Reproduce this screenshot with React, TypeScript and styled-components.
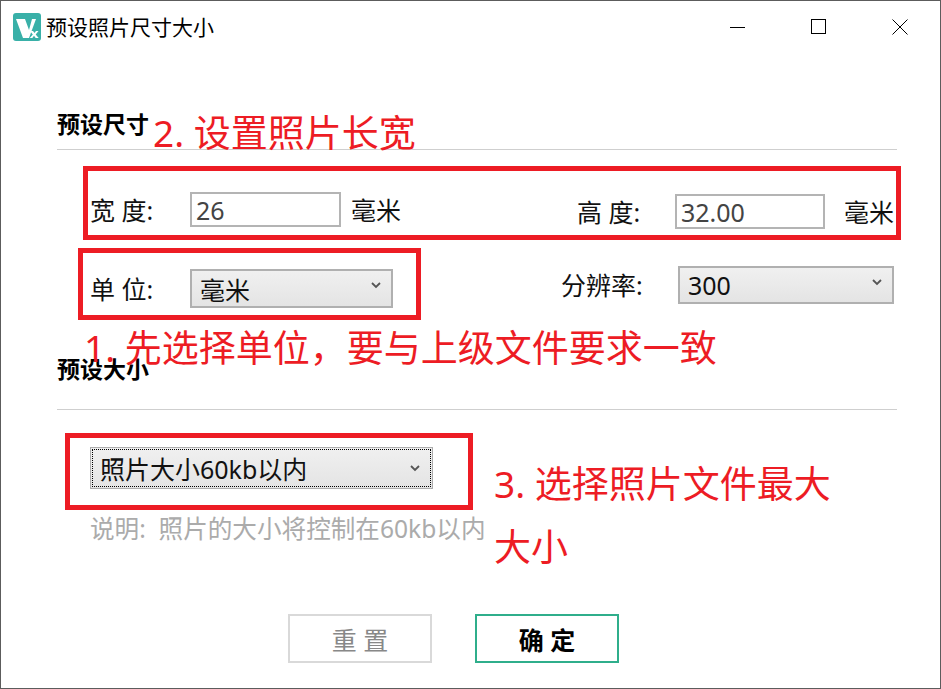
import styled, { createGlobalStyle } from "styled-components"

const GlobalStyle = createGlobalStyle`
    html, body {
        margin: 0;
        padding: 0;
        background: #fff;
    }
    * {
        box-sizing: border-box;
    }
`

function Logo() {
    return (
        <svg width="28" height="28" viewBox="0 0 28 28">
            <rect width="28" height="28" rx="3" fill="#39b0a8" />
            <path d="M3 6h9l4 11 3-11h4l-7 19h-6z" fill="#fff" />
            <path d="M17 18h3l1.5 2 1.5-2h2.500l-2.800 3.500 3 3.500h-3l-1.700-2.200-1.700 2.200h-2.500l3-3.500z" fill="#fff" />
        </svg>
    )
}

function Chevron() {
    return (
        <svg width="10" height="7" viewBox="0 0 10 7">
            <path d="M1 1l4 4 4-4" fill="none" stroke="#555" strokeWidth="1.800" />
        </svg>
    )
}

export default function App() {
    return (
        <Window>
            <GlobalStyle />
            <TitleBar>
                <Logo />
                <WindowTitle>预设照片尺寸大小</WindowTitle>
                <WindowButtons>
                    <WindowButton>
                        <svg width="16" height="16" viewBox="0 0 16 16">
                            <path d="M0 8.500h15" stroke="#000" />
                        </svg>
                    </WindowButton>
                    <WindowButton>
                        <svg width="16" height="16" viewBox="0 0 16 16">
                            <rect x="0.500" y="0.500" width="14" height="14" fill="none" stroke="#000" />
                        </svg>
                    </WindowButton>
                    <WindowButton>
                        <svg width="16" height="16" viewBox="0 0 16 16">
                            <path d="M0.500 0.500l15 15M15.500 0.500l-15 15" stroke="#000" />
                        </svg>
                    </WindowButton>
                </WindowButtons>
            </TitleBar>

            <Content>
                <SectionHead>预设尺寸</SectionHead>
                <Divider />
                <FormRow $top={42}>
                    <Field>
                        <FieldLabel>宽 度:</FieldLabel>
                        <TextBox $width={151}>26</TextBox>
                        <Unit>毫米</Unit>
                    </Field>
                    <Field $shift={2}>
                        <FieldLabel $width={98}>高 度:</FieldLabel>
                        <TextBox $width={150}>32.00</TextBox>
                        <Unit $gap={19}>毫米</Unit>
                    </Field>
                </FormRow>
                <FormRow $top={37}>
                    <Field $shift={3}>
                        <FieldLabel>单 位:</FieldLabel>
                        <SelectBox $width={203} $height={39}>
                            毫米
                            <Chevron />
                        </SelectBox>
                    </Field>
                    <Field>
                        <FieldLabel $width={117}>分辨率:</FieldLabel>
                        <SelectBox $width={216} $height={38}>
                            300
                            <Chevron />
                        </SelectBox>
                    </Field>
                </FormRow>

                <SectionHead $top={47}>预设大小</SectionHead>
                <Divider $top={26} />
                <SizeSelect>
                    <FocusRing>
                        照片大小60kb以内
                        <Chevron />
                    </FocusRing>
                </SizeSelect>
                <Hint>说明:&nbsp;&nbsp;照片的大小将控制在60kb以内</Hint>
                <Actions>
                    <ActionButton>重 置</ActionButton>
                    <ActionButton $primary>确 定</ActionButton>
                </Actions>
            </Content>

            <RedBox $left={83} $top={166} $width={818} $height={74} />
            <RedBox $left={78} $top={248} $width={343} $height={72} />
            <RedBox $left={65} $top={433} $width={408} $height={77} />

            <Note $left={153} $top={107}>2. 设置照片长宽</Note>
            <Note $left={84} $top={322}>1. 先选择单位，要与上级文件要求一致</Note>
            <Note $left={494} $top={458}>3. 选择照片文件最大</Note>
            <Note $left={494} $top={521}>大小</Note>
        </Window>
    )
}

const Window = styled.div`
    position: relative;
    width: 941px;
    height: 689px;
    overflow: hidden;
    display: flex;
    flex-direction: column;
    background: #fff;
    border: 1px solid #5c5c5c;
    font-family: "Noto Sans", "Noto Sans CJK SC", sans-serif;
    color: #111;
`

const TitleBar = styled.div`
    display: flex;
    align-items: center;
    height: 51px;
    padding-left: 12px;
    flex-shrink: 0;
`

const WindowTitle = styled.div`
    margin-left: 5px;
    font-size: 21px;
    line-height: 28px;
    color: #000;
`

const WindowButtons = styled.div`
    display: flex;
    margin-left: auto;
`

const WindowButton = styled.div`
    display: flex;
    align-items: center;
    justify-content: center;
    width: 81px;
    height: 51px;
`

const Content = styled.div`
    display: flex;
    flex-direction: column;
    padding: 58px 43px 0 56px;
`

const SectionHead = styled.div<{ $top?: number }>`
    margin-top: ${(p) => p.$top ?? 0}px;
    font-size: 23px;
    line-height: 28px;
    font-weight: 700;
    color: #000;
`

const Divider = styled.div<{ $top?: number }>`
    height: 1px;
    margin-top: ${(p) => p.$top ?? 11}px;
    background: #cfcfcf;
`

const FormRow = styled.div<{ $top: number }>`
    display: flex;
    justify-content: space-between;
    align-items: flex-start;
    margin-top: ${(p) => p.$top}px;
    padding: 0 3px 0 33px;
`

const Field = styled.div<{ $shift?: number }>`
    display: flex;
    align-items: center;
    margin-top: ${(p) => p.$shift ?? 0}px;
`

const FieldLabel = styled.div<{ $width?: number }>`
    width: ${(p) => p.$width ?? 100}px;
    font-size: 25px;
    line-height: 32px;
`

const TextBox = styled.div<{ $width: number }>`
    display: flex;
    align-items: center;
    width: ${(p) => p.$width}px;
    height: 35px;
    padding-left: 4px;
    border: 2px solid #b4b4b4;
    font-size: 25px;
    color: #444;
`

const Unit = styled.div<{ $gap?: number }>`
    margin-left: ${(p) => p.$gap ?? 10}px;
    font-size: 25px;
    line-height: 32px;
`

const SelectBox = styled.div<{ $width: number; $height: number }>`
    display: flex;
    align-items: center;
    justify-content: space-between;
    width: ${(p) => p.$width}px;
    height: ${(p) => p.$height}px;
    padding: 0 10px 0 8px;
    border: 2px solid #b0b0b0;
    background: linear-gradient(#f0f0f0, #e4e4e4);
    font-size: 25px;
    color: #111;

    svg {
        margin-bottom: 6px;
    }
`

const SizeSelect = styled.div`
    display: flex;
    width: 343px;
    height: 42px;
    margin: 37px 0 0 33px;
    padding: 1px;
    border: 1px solid #adadad;
    background: linear-gradient(#f0f0f0, #e4e4e4);
`

const FocusRing = styled.div`
    flex: 1;
    display: flex;
    align-items: center;
    justify-content: space-between;
    padding: 0 10px 0 7px;
    border: 1px dotted #000;
    font-size: 25px;
    color: #111;
`

const Hint = styled.div`
    margin: 23px 0 0 33px;
    font-size: 24.600px;
    line-height: 34px;
    color: #ababab;
`

const Actions = styled.div`
    display: flex;
    gap: 43px;
    margin: 68px 0 0 231px;
`

const ActionButton = styled.div<{ $primary?: boolean }>`
    display: flex;
    align-items: center;
    justify-content: center;
    width: 144px;
    height: 49px;
    border: 2px solid ${(p) => (p.$primary ? "#2fae8b" : "#d9d9d9")};
    font-size: 25px;
    font-weight: ${(p) => (p.$primary ? 700 : 400)};
    color: ${(p) => (p.$primary ? "#000" : "#888")};
`

const RedBox = styled.div<{ $left: number; $top: number; $width: number; $height: number }>`
    position: absolute;
    left: ${(p) => p.$left - 1}px;
    top: ${(p) => p.$top - 1}px;
    width: ${(p) => p.$width}px;
    height: ${(p) => p.$height}px;
    border: 5px solid #ed1c24;
`

const Note = styled.div<{ $left: number; $top: number }>`
    position: absolute;
    left: ${(p) => p.$left - 1}px;
    top: ${(p) => p.$top - 1}px;
    font-size: 37px;
    line-height: 52px;
    white-space: nowrap;
    color: #ed1c24;
`
